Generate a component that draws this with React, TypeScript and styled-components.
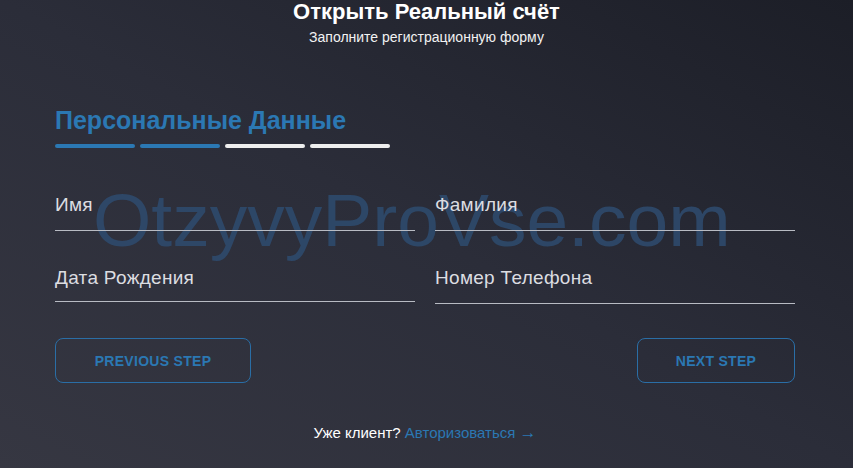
import React from 'react'
import styled, { createGlobalStyle } from 'styled-components'

const GlobalStyle = createGlobalStyle`
  html, body {
    margin: 0;
    padding: 0;
  }
  body {
    font-family: "Liberation Sans", Arial, sans-serif;
    background: #2a2c38;
  }
`;

const Page = styled.div`
  position: relative;
  width: 853px;
  height: 468px;
  overflow: hidden;
  background: linear-gradient(to top right, #363742 0%, #2b2d39 50%, #1c1e27 100%);
  color: #fff;
`;

const Header = styled.header`
  display: flex;
  flex-direction: column;
  align-items: center;
`;

const Title = styled.h1`
  margin: 0;
  font-size: 22px;
  line-height: 24px;
  font-weight: 700;
  color: #fff;
`;

const Subtitle = styled.p`
  margin: 5px 0 0;
  font-size: 14px;
  line-height: 16px;
  color: #f2f2f2;
`;

const Form = styled.form`
  position: relative;
  z-index: 1;
  margin: 61px 58px 0 55px;
`;

const StepTitle = styled.h2`
  margin: 0;
  font-size: 25px;
  line-height: 28px;
  font-weight: 700;
  color: #2b78b3;
`;

const Progress = styled.div`
  display: flex;
  gap: 5px;
  margin-top: 10px;
`;

const ProgressBar = styled.span<{ $done?: boolean }>`
  width: 80px;
  height: 4px;
  border-radius: 2px;
  background: ${p => (p.$done ? '#2b78b3' : '#eeeeee')};
`;

const Fields = styled.div`
  display: grid;
  grid-template-columns: 1fr 1fr;
  align-items: start;
  column-gap: 20px;
  row-gap: 36px;
  margin-top: 46px;
`;

const Field = styled.label<{ $pad: number }>`
  display: block;
  font-size: 19px;
  line-height: 22px;
  letter-spacing: 0.3px;
  color: #dcdde1;
  padding-bottom: ${p => p.$pad}px;
  border-bottom: 1px solid #b8bbc3;
`;

const Actions = styled.div`
  display: flex;
  justify-content: space-between;
  margin-top: 34px;
`;

const StepButton = styled.button<{ $w: number }>`
  width: ${p => p.$w}px;
  height: 45px;
  border: 1px solid #2a6ea6;
  border-radius: 8px;
  background: transparent;
  color: #2b78b3;
  font-family: "Liberation Sans", Arial, sans-serif;
  font-size: 14px;
  font-weight: 700;
  letter-spacing: 0.3px;
  text-transform: uppercase;
`;

const Footer = styled.p`
  margin: 41px 0 0;
  text-align: center;
  font-size: 15px;
  line-height: 18px;
  color: #fff;
`;

const LoginLink = styled.a`
  color: #2b78b3;
  text-decoration: none;
`;

const Arrow = styled.span`
  font-size: 17px;
`;

const Watermark = styled.div`
  position: absolute;
  left: 93px;
  top: 175px;
  z-index: 0;
  font-family: "Liberation Sans", Arial, sans-serif;
  font-size: 75px;
  line-height: 90px;
  color: #2e4a6c;
  opacity: 0.9;
  pointer-events: none;
  white-space: nowrap;
`;

export default function App() {
  const steps = [true, true, false, false];

  return (
    <>
      <GlobalStyle />
      <Page>
        <Watermark>OtzyvyProVse.com</Watermark>
        <Header>
          <Title>Открыть Реальный счёт</Title>
          <Subtitle>Заполните регистрационную форму</Subtitle>
        </Header>
        <Form onSubmit={e => e.preventDefault()}>
          <StepTitle>Персональные Данные</StepTitle>
          <Progress>
            {steps.map((done, i) => (
              <ProgressBar key={i} $done={done} />
            ))}
          </Progress>
          <Fields>
            <Field $pad={14}>Имя</Field>
            <Field $pad={14}>Фамилия</Field>
            <Field $pad={12}>Дата Рождения</Field>
            <Field $pad={14}>Номер Телефона</Field>
          </Fields>
          <Actions>
            <StepButton type="button" $w={196}>Previous Step</StepButton>
            <StepButton type="button" $w={158}>Next Step</StepButton>
          </Actions>
          <Footer>
            Уже клиент? <LoginLink href="#">Авторизоваться <Arrow>→</Arrow></LoginLink>
          </Footer>
        </Form>
      </Page>
    </>
  );
}
